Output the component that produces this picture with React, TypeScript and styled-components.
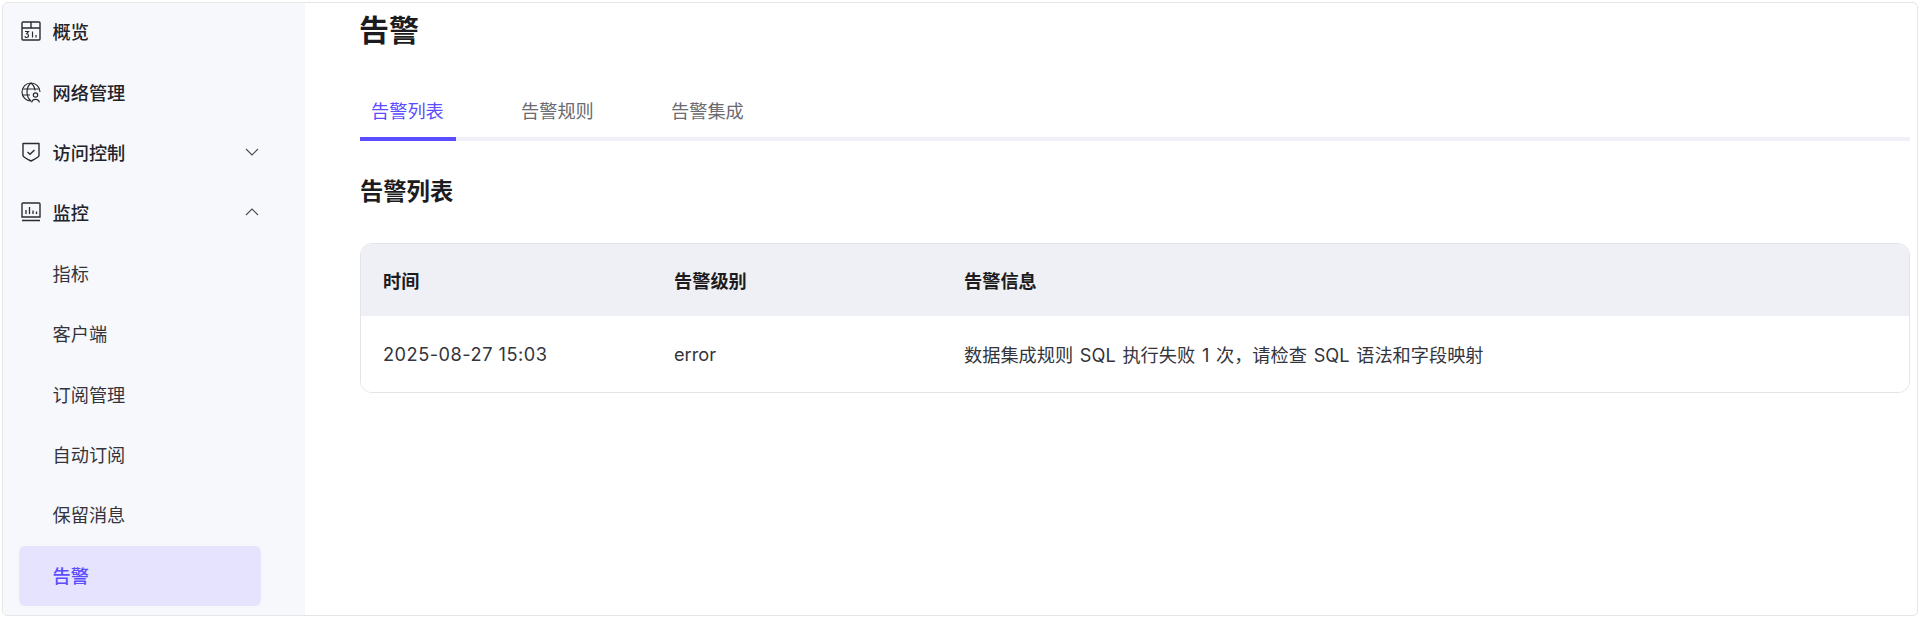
import React from "react";
import styled, { createGlobalStyle } from "styled-components";

const Global = createGlobalStyle`
  html, body { margin: 0; padding: 0; background: #fff; }
  body { font-family: Inter, "Noto Sans CJK SC", sans-serif; }
`;

const Frame = styled.div`
  box-sizing: border-box;
  width: 1920px;
  height: 618px;
  padding: 2px;
  background: #fff;
`;

const Window = styled.div`
  box-sizing: border-box;
  display: flex;
  width: 100%;
  height: 100%;
  background: #fff;
  border: 1px solid #e6e6e6;
  border-radius: 5px;
  overflow: hidden;
`;

const Sidebar = styled.nav`
  box-sizing: border-box;
  width: 302px;
  flex: none;
  background: #f7f8fc;
  padding: 0 44px 9px 16px;
  display: flex;
  flex-direction: column;
  justify-content: flex-end;
`;

const NavRow = styled.div<{ $active?: boolean; $sub?: boolean }>`
  box-sizing: border-box;
  height: 60.4px;
  flex: none;
  display: flex;
  align-items: center;
  padding: 0 0 2px ${(p) => (p.$sub ? "33.5px" : "2px")};
  border-radius: 6px;
  font-size: 18.2px;
  font-weight: ${(p) => (p.$sub && !p.$active ? 400 : 500)};
  color: ${(p) => (p.$active ? "#5b4cff" : p.$sub ? "#33343c" : "#22232a")};
  background: ${(p) => (p.$active ? "#e6e3fe" : "transparent")};
`;

const IconSlot = styled.span`
  width: 20px;
  height: 20px;
  margin-right: 11.5px;
  flex: none;
  color: #2a2b31;
  svg { display: block; }
`;

const NavLabel = styled.span`
  flex: 1;
`;

const Caret = styled.svg`
  flex: none;
  margin-right: 2px;
`;

const Main = styled.main`
  flex: 1;
  min-width: 0;
  padding: 0 7px 0 55px;
`;

const Title = styled.h1`
  margin: 0 0 0 -1px;
  height: 61px;
  font-size: 30px;
  line-height: 54px;
  font-weight: 600;
  color: #1c1c20;
`;

const Tabs = styled.div`
  display: flex;
  height: 62px;
  margin-top: 11px;
  border-bottom: 4px solid #f1f0f8;
`;

const Tab = styled.div<{ $active?: boolean }>`
  box-sizing: content-box;
  width: 72px;
  padding: 0 13px 0 11px;
  margin-right: 54px;
  height: 62px;
  line-height: 72px;
  font-size: 18.2px;
  white-space: nowrap;
  color: ${(p) => (p.$active ? "#5b4cff" : "#6a6a70")};
  border-bottom: 4px solid ${(p) => (p.$active ? "#5b4cff" : "transparent")};
`;

const Section = styled.h2`
  margin: 0;
  padding-top: 35px;
  font-size: 23.3px;
  line-height: 32px;
  font-weight: 600;
  color: #1c1c20;
`;

const Table = styled.div`
  margin-top: 35px;
  border: 1px solid #e2e4ea;
  border-radius: 12px;
  overflow: hidden;
`;

const Row = styled.div<{ $head?: boolean }>`
  display: grid;
  grid-template-columns: 291px 290px 1fr;
  align-items: center;
  padding-left: 22px;
  height: ${(p) => (p.$head ? "72px" : "76px")};
  background: ${(p) => (p.$head ? "#eff0f5" : "#fff")};
  font-size: 18.2px;
  font-weight: ${(p) => (p.$head ? 600 : 400)};
  color: ${(p) => (p.$head ? "#1c1c20" : "#33343c")};
`;

const Cell = styled.div<{ $track?: string; $words?: string }>`
  white-space: nowrap;
  letter-spacing: ${(p) => p.$track ?? "normal"};
  word-spacing: ${(p) => p.$words ?? "normal"};
`;

const Stroke = {
  fill: "none",
  stroke: "currentColor",
  strokeWidth: 1.4,
} as const;

const CalendarIcon = () => (
  <svg width="20" height="20" viewBox="0 0 20 20" {...Stroke}>
    <rect x="1" y="1" width="18" height="18" rx="1" />
    <path d="M1 7h18M10 1v6" />
    <path d="M4 10.500h3.500l-1.800 2.200a1.900 1.900 0 1 1-1.900 2.500M11.500 10.500v6M15 14v2.500" strokeWidth="1.2" />
  </svg>
);

const GlobeIcon = () => (
  <svg width="20" height="22" viewBox="0 0 20 22" {...Stroke} strokeWidth="1.2">
    <path d="M10 19a9 9 0 1 1 9-9" />
    <path d="M10 1c-3 2.400-4 5.400-4 9s1 6.600 4 9M10 1c2.700 2.200 3.800 4.600 4 7.500M1.500 7h17M1.500 13H9" />
    <circle cx="14.500" cy="13" r="2.200" />
    <path d="M10.700 20.500c.2-2 1.800-3.200 3.800-3.200s3.600 1.200 3.800 3.200" />
  </svg>
);

const ShieldIcon = () => (
  <svg width="20" height="20" viewBox="0 0 20 20" {...Stroke}>
    <path d="M2 1.500h16v12c0 1.500-5.500 4.300-8 5.500-2.500-1.200-8-4-8-5.500z" strokeLinejoin="round" />
    <path d="M6.500 10l2.500 2.200L13.500 8" />
  </svg>
);

const MonitorIcon = () => (
  <svg width="20" height="20" viewBox="0 0 20 20" {...Stroke}>
    <path d="M1 15V2a1 1 0 0 1 1-1h16a1 1 0 0 1 1 1v13z" />
    <path d="M1 18.500h18" />
    <path d="M5 12V8M8.500 12V5M12 12V8.500M15.500 12v-2.500" strokeWidth="1.3" />
  </svg>
);

const ChevronDown = () => (
  <Caret width="14" height="8" viewBox="0 0 14 8" fill="none" stroke="#4a4b52" strokeWidth="1.100">
    <path d="M1 1l6 6 6-6" />
  </Caret>
);

const ChevronUp = () => (
  <Caret width="14" height="8" viewBox="0 0 14 8" fill="none" stroke="#4a4b52" strokeWidth="1.100">
    <path d="M1 7l6-6 6 6" />
  </Caret>
);

const subItems = ["指标", "客户端", "订阅管理", "自动订阅", "保留消息"];

export default function App() {
  return (
    <>
      <Global />
      <Frame>
        <Window>
          <Sidebar>
            <NavRow>
              <IconSlot><CalendarIcon /></IconSlot>
              <NavLabel>概览</NavLabel>
            </NavRow>
            <NavRow>
              <IconSlot><GlobeIcon /></IconSlot>
              <NavLabel>网络管理</NavLabel>
            </NavRow>
            <NavRow>
              <IconSlot><ShieldIcon /></IconSlot>
              <NavLabel>访问控制</NavLabel>
              <ChevronDown />
            </NavRow>
            <NavRow>
              <IconSlot><MonitorIcon /></IconSlot>
              <NavLabel>监控</NavLabel>
              <ChevronUp />
            </NavRow>
            {subItems.map((label) => (
              <NavRow $sub key={label}>{label}</NavRow>
            ))}
            <NavRow $sub $active>告警</NavRow>
          </Sidebar>
          <Main>
            <Title>告警</Title>
            <Tabs>
              <Tab $active>告警列表</Tab>
              <Tab>告警规则</Tab>
              <Tab>告警集成</Tab>
            </Tabs>
            <Section>告警列表</Section>
            <Table>
              <Row $head>
                <Cell>时间</Cell>
                <Cell>告警级别</Cell>
                <Cell>告警信息</Cell>
              </Row>
              <Row>
                <Cell $track="0.5px">2025-08-27 15:03</Cell>
                <Cell>error</Cell>
                <Cell $words="1.6px">数据集成规则 SQL 执行失败 1 次，请检查 SQL 语法和字段映射</Cell>
              </Row>
            </Table>
          </Main>
        </Window>
      </Frame>
    </>
  );
}
